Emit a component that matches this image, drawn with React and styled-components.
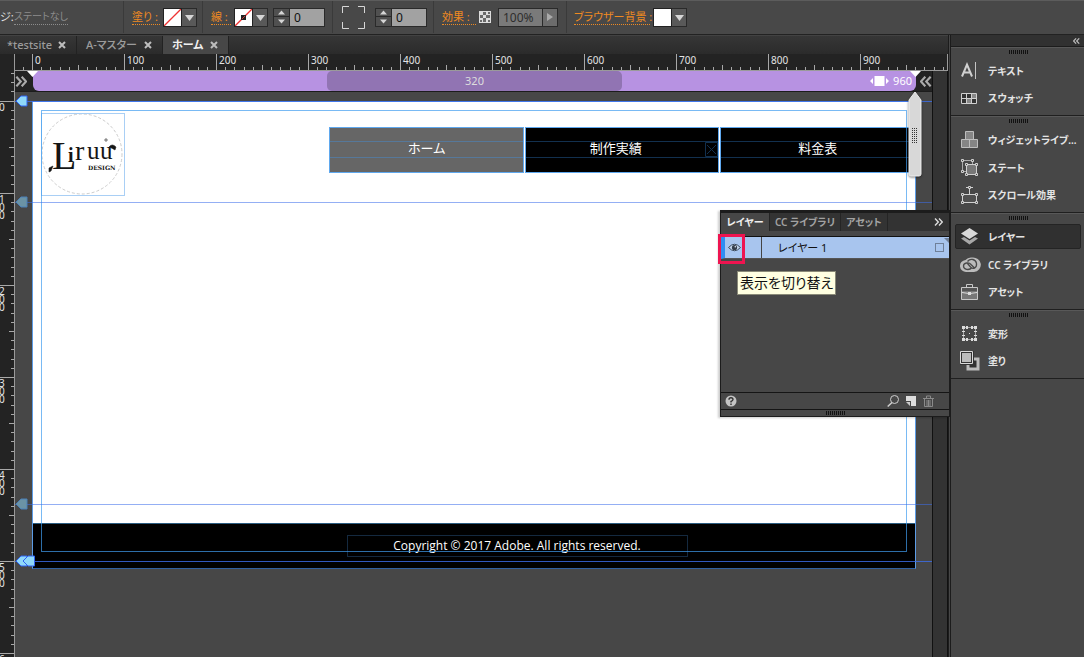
import React from "react";
import styled, { createGlobalStyle } from "styled-components";

const GlobalStyle = createGlobalStyle`
  * { box-sizing: border-box; }
  body {
    margin: 0;
    background: #474747;
    color: #e4e4e4;
    font-family: "Noto Sans", "Noto Sans CJK JP", sans-serif;
    font-size: 11px;
    line-height: 16px;
    font-feature-settings: "palt";
  }
  button, input {
    margin: 0;
    padding: 0;
    border: 0;
    border-radius: 0;
    background: none;
    color: inherit;
    font: inherit;
    font-feature-settings: inherit;
  }
  svg { display: block; flex: none; }
`;

const App = styled.div`
  display: flex;
  flex-direction: column;
  height: 100vh;
  overflow: hidden;
  white-space: nowrap;
`;

/* ---------- control strip ---------- */

const ControlStrip = styled.header`
  display: flex;
  flex: none;
  height: 35px;
  padding-bottom: 1px;
  border-top: 1px solid #5c5c5c;
  border-bottom: 1px solid #222;
  background: #484848;
`;

const ControlGroup = styled.div`
  display: flex;
  align-items: center;
  flex: none;
  width: ${(p) => p.$width}px;
  padding-left: ${(p) => p.$pad ?? 8}px;
  border-right: ${(p) => (p.$last ? "0" : "1px solid #3a3a3a")};
`;

const StateLabel = styled.span`
  flex: none;
  width: 14px;
`;

const FlyoutLink = styled.a`
  flex: none;
  width: ${(p) => (p.$width ? `${p.$width}px` : "auto")};
  margin-right: 3px;
  color: ${(p) => (p.$muted ? "#8c8c8c" : "#ee8a22")};
  font-size: ${(p) => (p.$muted ? 10 : 11)}px;
  line-height: 15px;
  text-decoration: none;
  border-bottom: 1px dotted currentColor;
`;

const SwatchButton = styled.button`
  width: 19px;
  height: 19px;
  border: 1px solid #222;
  background: #fff;
`;

const DropButton = styled.button`
  display: grid;
  place-items: center;
  width: 15px;
  height: 19px;
  border: 1px solid #2a2a2a;
  border-left: 0;
  background: ${(p) => (p.$dim ? "#6c6c6c" : "#595959")};
`;

const Spinner = styled.div`
  display: grid;
  grid-template-rows: 1fr 1fr;
  width: 17px;
  height: 19px;
  border: 1px solid #2a2a2a;
  background: #505050;
`;

const SpinButton = styled.button`
  display: grid;
  place-items: center;
  border-bottom: ${(p) => (p.$up ? "1px solid #2a2a2a" : "0")};
`;

const NumberBox = styled.input`
  width: ${(p) => p.$width}px;
  height: 19px;
  padding-left: 4px;
  border: 1px solid #2a2a2a;
  border-left: ${(p) => (p.$dim ? "1px solid #2a2a2a" : "0")};
  background: ${(p) => (p.$dim ? "#7a7a7a" : "#a2a2a2")};
  color: ${(p) => (p.$dim ? "#2e2e2e" : "#111")};
  font-size: 12px;
`;

const IconSlot = styled.span`
  margin-right: ${(p) => p.$gap}px;
`;

/* ---------- editor ---------- */

const Body = styled.div`
  display: flex;
  flex: 1;
  min-height: 0;
`;

const Editor = styled.main`
  display: flex;
  flex-direction: column;
  flex: 1;
  min-width: 0;
  position: relative;
`;

const TabBar = styled.nav`
  display: flex;
  flex: none;
  height: 19px;
  border-top: 1px solid #424242;
  background: linear-gradient(#363636, #2b2b2b);
`;

const Tab = styled.div`
  display: flex;
  align-items: center;
  flex: none;
  width: ${(p) => p.$width}px;
  padding: 0 10px 0 ${(p) => p.$pad}px;
  justify-content: space-between;
  border-right: 1px solid #222;
  background: ${(p) => (p.$active ? "#474747" : "none")};
  color: ${(p) => (p.$active ? "#f0f0f0" : "#9c9c9c")};
`;

const TabName = styled.button`
  font-weight: ${(p) => (p.$active ? 600 : 500)};
`;

const CloseButton = styled.button`
  color: #bdbdbd;
`;

const Stage = styled.div`
  display: flex;
  flex: 1;
  min-height: 0;
  background: #232323;
`;

const SideRuler = styled.div`
  flex: none;
  width: 15px;
  overflow: hidden;
  border-right: 1px solid #9a9a9a;
`;

const SideSegment = styled.div`
  display: grid;
  height: ${(p) => (p.$lead ? 47 : 92)}px;
  & > * { grid-area: 1 / 1; }
`;

const StackedDigits = styled.span`
  display: flex;
  flex-direction: column;
  margin-left: -1px;
  padding-top: 2px;
  font-size: 10px;
  line-height: 8px;
`;

const StageColumn = styled.div`
  display: flex;
  flex-direction: column;
  flex: 1;
  min-width: 0;
`;

const TopRuler = styled.div`
  display: flex;
  flex: none;
  height: 17px;
  overflow: hidden;
  border-bottom: 1px solid #9a9a9a;
  border-right: 1px solid #9a9a9a;
`;

const TopSegment = styled.div`
  display: grid;
  flex: none;
  width: ${(p) => (p.$lead ? 17 : 92)}px;
  & > * { grid-area: 1 / 1; }
`;

const RulerNumber = styled.span`
  padding-left: 3px;
  font-size: 10px;
  line-height: 13px;
`;

const ViewRow = styled.div`
  display: flex;
  flex: 1;
  min-height: 0;
`;

const View = styled.div`
  flex: 1;
  min-width: 0;
  background: #474747;
  position: relative;
`;

const ScrollTrack = styled.div`
  flex: none;
  width: 16px;
  border: solid #111;
  border-width: 0 1px;
  background: #333;
`;

const BreakpointRow = styled.div`
  display: flex;
  align-items: flex-start;
  height: 21px;
  background: #232323;
  border-bottom: 1px solid #1c1c1c;
`;

const BreakpointEnd = styled.button`
  display: flex;
  align-items: center;
  flex: none;
  justify-content: ${(p) => (p.$right ? "flex-end" : "flex-start")};
  width: ${(p) => (p.$right ? 16 : 18)}px;
  height: 20px;
`;

const BreakpointBar = styled.div`
  display: grid;
  grid-template-columns: 1fr 1fr 1fr;
  flex: 1;
  height: 20px;
  border-radius: 4px 4px 6px 6px;
  background: #b792e2;
  color: #fff;
  line-height: 20px;
`;

const BreakpointMiddle = styled.span`
  grid-column: 2;
  border-radius: 5px;
  background: #9174b3;
  color: #ddd;
  text-align: center;
`;

const BreakpointWidth = styled.span`
  display: flex;
  align-items: center;
  justify-content: flex-end;
  gap: 4px;
  padding-right: 4px;
`;

const BarNotch = styled.svg`
  position: absolute;
  top: 0;
  ${(p) => (p.$right ? "right: 11px" : "left: 12px")};
`;

/* ---------- web page on the canvas ---------- */

const SitePage = styled.article`
  display: flex;
  flex-direction: column;
  margin: 9px 16px 0 17px;
  border: 1px solid #5c9ce6;
  border-bottom-color: #2f5fa0;
  background: #fff;
`;

const SiteHeader = styled.div`
  display: flex;
  justify-content: space-between;
  height: 101px;
  padding: 11px 0 0 8px;
`;

const LogoFrame = styled.div`
  width: 84px;
  height: 83px;
  border: 1px solid #a9cff5;
`;

const SiteNav = styled.nav`
  display: flex;
  flex: none;
  gap: 1px;
  width: 588px;
  max-width: 67%;
  height: 46px;
  margin-top: 14px;
`;

const NavItem = styled.a`
  display: flex;
  align-items: center;
  flex: 1;
  padding-bottom: 1px;
  border: 1px solid #5fa8ee;
  background: ${(p) => (p.$active ? "#666" : "#000")};
  color: #fff;
  text-decoration: none;
`;

const NavText = styled.span`
  display: flex;
  align-items: center;
  justify-content: center;
  flex: 1;
  height: 17px;
  padding: 0 ${(p) => (p.$spacer ? 13 : 0)}px 2px 0;
  border: solid ${(p) => (p.$active ? "#56789a" : "#12304e")};
  border-width: 1px 0;
  font-size: 13px;
  line-height: 13px;
  position: relative;
`;

const SpacerMark = styled.svg`
  position: absolute;
  right: 0;
  top: 0;
`;

const SiteMain = styled.div`
  min-height: 320px;
`;

const SiteFooter = styled.footer`
  display: flex;
  justify-content: center;
  padding: 11px 0 11px 86px;
  border-top: 1px solid #2b5c80;
  background: #000;
`;

const Copyright = styled.p`
  width: 341px;
  margin: 0;
  border: 1px solid #14293f;
  color: #fff;
  font-family: "Open Sans", "Noto Sans", sans-serif;
  font-size: 12px;
  font-weight: 500;
  line-height: 20px;
  text-align: center;
`;

const MarginFrame = styled.div`
  position: absolute;
  top: 39px;
  left: 26px;
  right: 25px;
  height: 442px;
  border: 1px solid rgba(64, 156, 240, 0.7);
  pointer-events: none;
`;

const Guide = styled.div`
  position: absolute;
  left: 0;
  right: 0;
  top: ${(p) => p.$top}px;
  height: 1px;
  background: rgba(60, 110, 235, ${(p) => (p.$faint ? 0.55 : 0.8)});
`;

const GuideHandle = styled.svg`
  position: absolute;
  left: 0;
  top: -6px;
`;

const WidthHandle = styled.svg`
  position: absolute;
  right: 10px;
  top: 20px;
  filter: drop-shadow(0 1px 1px rgba(0, 0, 0, 0.5));
`;

/* ---------- floating layers panel ---------- */

const LayersPanel = styled.section`
  position: absolute;
  top: 175px;
  right: -2px;
  width: 230px;
  display: flex;
  flex-direction: column;
  border: 1px solid #1c1c1c;
  border-top-width: 3px;
  background: #474747;
  box-shadow: -2px 1px 2px rgba(0, 0, 0, 0.2);
  font-size: 10px;
  font-weight: 600;
`;

const PanelTabs = styled.div`
  display: flex;
  align-items: stretch;
  height: 18px;
  background: #333;
`;

const PanelTab = styled.button`
  width: ${(p) => p.$width}px;
  border-right: 1px solid #252525;
  background: ${(p) => (p.$active ? "#474747" : "none")};
  color: ${(p) => (p.$active ? "#eee" : "#a2a2a2")};
  font-weight: 600;
`;

const PanelMenu = styled.button`
  margin-left: auto;
  padding-right: 6px;
`;

const LayerRow = styled.div`
  display: flex;
  align-items: center;
  height: 23px;
  margin-top: 5px;
  border-top: 1px solid #111;
  border-left: 4px solid #2f8ef4;
  border-bottom: 1px solid #555;
  background: #a8c5ee;
  color: #111;
  font-size: 11px;
  font-weight: 400;
  position: relative;
`;

const LayerEye = styled.button`
  display: grid;
  place-items: center;
  width: 19px;
  height: 21px;
`;

const LayerName = styled.span`
  flex: 1;
  height: 21px;
  margin-left: 17px;
  padding-left: 16px;
  border-left: 1px solid #444;
  line-height: 22px;
`;

const LayerTarget = styled.button`
  width: 9px;
  height: 9px;
  margin-right: 5px;
  border: 1px solid #6f8099;
`;

const RowCorner = styled.svg`
  position: absolute;
  right: 0;
  top: 1px;
`;

const Highlight = styled.div`
  position: absolute;
  top: -3px;
  left: -7px;
  width: 27px;
  height: 30px;
  border: 3px solid #ee1450;
`;

const Tooltip = styled.div`
  position: absolute;
  top: 58px;
  left: 16px;
  padding: 0 2px;
  border: 1px solid #8a8a78;
  background: #ffffe1;
  color: #111;
  font-size: 14px;
  font-weight: 400;
  line-height: 22px;
`;

const PanelBody = styled.div`
  min-height: 133px;
`;

const PanelFooter = styled.div`
  display: flex;
  align-items: center;
  gap: 7px;
  height: 18px;
  padding: 0 15px 0 4px;
  border: solid #151515;
  border-width: 1px 0;
`;

const FooterButton = styled.button`
  margin-right: ${(p) => (p.$first ? "auto" : "0")};
`;

const PanelGrip = styled.div`
  display: grid;
  place-items: center;
  height: 6px;
`;

/* ---------- dock ---------- */

const Dock = styled.aside`
  flex: none;
  width: 136px;
  border-left: 3px double #1c1c1c;
  background: #474747;
`;

const DockTop = styled.div`
  display: flex;
  align-items: center;
  justify-content: flex-end;
  height: 12px;
  padding-right: 4px;
  border-bottom: 1px solid #1c1c1c;
  background: #313131;
`;

const DockGroup = styled.ul`
  display: flex;
  flex-direction: column;
  margin: 0;
  padding: 9px 3px 3px 4px;
  border-top: 1px solid #585858;
  border-bottom: 1px solid #1f1f1f;
  list-style: none;
  position: relative;
  height: ${(p) => 13 + p.$count * 28}px;
`;

const DockGrip = styled.svg`
  position: absolute;
  top: 2px;
  left: 57px;
`;

const DockSlot = styled.li`
  display: flex;
  align-items: center;
  height: 28px;
`;

const DockButton = styled.button`
  display: flex;
  align-items: center;
  gap: 7px;
  width: 100%;
  height: 25px;
  padding-left: 4px;
  border: 1px solid ${(p) => (p.$active ? "#242424" : "transparent")};
  border-radius: 2px;
  background: ${(p) => (p.$active ? "#303030" : "none")};
  font-size: 10px;
  font-weight: 600;
`;

/* ---------- drawings ---------- */

const Down = () => (
  <svg width="9" height="7"><path d="M0 1h9L4.500 7z" fill="#d6d6d6" /></svg>
);
const SpinArrow = ({ up }) => (
  <svg width="7" height="5"><path d={up ? "M0 4.500L3.500 .5 7 4.500z" : "M0 .5h7L3.500 4.500z"} fill="#d6d6d6" /></svg>
);
const Cross = () => (
  <svg width="8" height="8"><path d="M1 1l6 6M7 1L1 7" stroke="currentColor" strokeWidth="2" /></svg>
);
const Chevrons = ({ left, size = 8, width = 1.4, color = "#ddd" }) => (
  <svg width={size + 1} height={size} viewBox="0 0 9 8" preserveAspectRatio="none">
    <path d={left ? "M4 .5L.7 4 4 7.500M8 .5L4.700 4 8 7.500" : "M1 .5L4.300 4 1 7.500M5 .5L8.300 4 5 7.500"} fill="none" stroke={color} strokeWidth={width} />
  </svg>
);
const gripLines = "M1 0v4M3 0v4M5 0v4M7 0v4M9 0v4M11 0v4M13 0v4M15 0v4M17 0v4M19 0v4";
const gripProps = { width: 20, height: 4, stroke: "#111", shapeRendering: "crispEdges", "aria-hidden": true };

const tickOffsets = [0, 9, 18, 28, 37, 46, 55, 64, 74, 83];
const tickSize = (i) => (i === 0 ? 16 : i === 5 ? 5 : 3);

function TopTicks() {
  return (
    <svg width="92" height="16" fill="#a8a8a8" shapeRendering="crispEdges">
      {tickOffsets.map((x, i) => <rect key={x} x={x} y={16 - tickSize(i)} width="1" height={tickSize(i)} />)}
    </svg>
  );
}

function SideTicks() {
  return (
    <svg width="14" height="92" fill="#a8a8a8" shapeRendering="crispEdges">
      {tickOffsets.map((y, i) => <rect key={y} y={y} x={14 - tickSize(i)} height="1" width={tickSize(i)} />)}
    </svg>
  );
}

const node = { fill: "#474747", stroke: "#d0d0d0" };

const dockIcons = {
  text: (
    <svg width="21" height="21" viewBox="0 0 21 21">
      <path d="M2 16.500L7 4.500l5 12M4 12.500h6" fill="none" stroke="#d0d0d0" strokeWidth="2" />
      <path d="M15.500 2v17" stroke="#c4c4c4" />
    </svg>
  ),
  swatch: (
    <svg width="21" height="21" viewBox="0 0 21 21">
      <path d="M1.500 5.500h15v10h-15z" fill="#333" stroke="#d0d0d0" />
      <path d="M12 6h4v4h-4zM7 11h4v4H7z" fill="#888" />
      <path d="M6.500 5v11M11.500 5v11M1 10.500h16" stroke="#d0d0d0" />
    </svg>
  ),
  widget: (
    <svg width="21" height="21" viewBox="0 0 21 21" fill="#858585" stroke="#bdbdbd">
      <path d="M5.500 2.500h8v8h-8zM1.500 10.500h8v8h-8zM9.500 10.500h8v8h-8z" />
    </svg>
  ),
  state: (
    <svg width="21" height="21" viewBox="0 0 21 21">
      <path d="M2.500 3.500h10v11h-10z" fill="none" stroke="#aaa" />
      <path d="M6.500 7.500h10v10h-10z" fill="#777" stroke="#d0d0d0" />
      <path d="M1.500 2.500h2v2h-2zM11.500 2.500h2v2h-2zM1.500 13.500h2v2h-2zM5.500 6.500h2v2h-2zM15.500 6.500h2v2h-2zM5.500 16.500h2v2h-2zM15.500 16.500h2v2h-2z" {...node} />
    </svg>
  ),
  scroll: (
    <svg width="21" height="21" viewBox="0 0 21 21">
      <path d="M2.500 9.500h14v8h-14z" fill="#505050" stroke="#d0d0d0" />
      <path d="M9.500 9V3M6 2.500h7" stroke="#d0d0d0" />
      <path d="M8.500 1.500h2v2h-2zM1.500 8.500h2v2h-2zM15.500 8.500h2v2h-2zM1.500 16.500h2v2h-2zM15.500 16.500h2v2h-2z" {...node} />
    </svg>
  ),
  layers: (
    <svg width="21" height="21" viewBox="0 0 21 21">
      <path d="M1 12.500l3-1.500 5.500 3.500L15 11l3 1.500-8.500 6z" fill="#a8a8a8" />
      <path d="M9.500 2L18 7.500 9.500 13 1 7.500z" fill="#dadada" />
    </svg>
  ),
  cloud: (
    <svg width="21" height="21" viewBox="0 0 21 21">
      <path d="M6.500 18a6 6 0 0 1-1-12Q8 3 12 3.500A7.500 7 0 0 1 14 18z" fill="#bcbcbc" />
      <path d="M12 13.500C9 17 3.500 15.500 3.500 12S9 8 11 10.500l3.500 3.500M7.500 7.500c3-4 8.500-2 9 2 .5 4-3 6.500-6 3.500L7.500 9.500" fill="none" stroke="#4a4a4a" strokeWidth="1.300" />
    </svg>
  ),
  asset: (
    <svg width="21" height="21" viewBox="0 0 21 21">
      <path d="M6.500 5V2.500h6V5" fill="none" stroke="#c8c8c8" />
      <path d="M1.500 5.500h16v12h-16z" fill="#777" stroke="#c8c8c8" />
      <path d="M2 6h15v3H2z" fill="#555" />
      <path d="M2 10.500l7 1h1l7-1" fill="none" stroke="#ddd" />
      <path d="M8 10h3v3H8z" fill="#ddd" />
    </svg>
  ),
  transform: (
    <svg width="21" height="21" viewBox="0 0 21 21" fill="#dcdcdc">
      <path d="M3.500 4.500h12v12h-12z" fill="none" stroke="#a8a8a8" />
      <path d="M2 3h3v3H2zM6 3h2v3H6zM11 3h2v3h-2zM14 3h3v3h-3zM2 8h3v1H2zM2 12h3v1H2zM14 8h3v1h-3zM14 12h3v1h-3zM2 15h3v3H2zM6 15h2v3H6zM11 15h2v3h-2zM14 15h3v3h-3zM9 10h1v1H9z" />
    </svg>
  ),
  fill: (
    <svg width="21" height="21" viewBox="0 0 21 21">
      <path d="M8 8h10v10H8z" fill="#333" stroke="#bcbcbc" strokeWidth="3" />
      <path d="M0 0h14v14H0z" fill="#333" />
      <path d="M.5 .5h12v12H.500z" fill="#333" stroke="#dadada" />
      <path d="M2 2h9v9H2z" fill="#bcbcbc" />
    </svg>
  ),
};

function Logo() {
  return (
    <svg width="82" height="81" viewBox="0 0 82 81" role="img" aria-label="Liruu DESIGN" fontFamily="Liberation Serif, serif" fill="#151515">
      <circle cx="40" cy="40" r="40" fill="none" stroke="#ccc" strokeDasharray="3 2" />
      <text x="10" y="55" fontSize="40">L</text>
      <text x="26" y="48" fontSize="20" fontWeight="700">i</text>
      <text x="33" y="46" fontSize="28">r</text>
      <text x="45" y="45" fontSize="25">u</text>
      <text x="58" y="45" fontSize="25">u</text>
      <text x="46" y="56" fontSize="6" fontWeight="700" fontFamily="DejaVu Serif, serif">DESIGN</text>
      <path d="M67 33q3-4 7 0l-1 3q-3-2-6-3zM7 54l4-2-2 5-2 1zM62 26h4M64 24v4" stroke="#222" strokeWidth=".6" />
    </svg>
  );
}

/* ---------- data ---------- */

const topMarks = ["0", "100", "200", "300", "400", "500", "600", "700", "800", "900"];
const sideMarks = ["0", "100", "200", "300", "400", "500", "600"];

const dockGroups = [
  [["text", "テキスト"], ["swatch", "スウォッチ"]],
  [["widget", "ウィジェットライブ..."], ["state", "ステート"], ["scroll", "スクロール効果"]],
  [["layers", "レイヤー", true], ["cloud", "CC ライブラリ"], ["asset", "アセット"]],
  [["transform", "変形"], ["fill", "塗り"]],
];

const tabs = [
  { name: "*testsite", width: 77, pad: 7 },
  { name: "A-マスター", width: 86, pad: 9 },
  { name: "ホーム", width: 66, pad: 9, active: true },
];

const guides = [
  { top: 30, kind: "bright" },
  { top: 131, kind: "dim", faint: true },
  { top: 433, kind: "dim", faint: true },
  { top: 490, kind: "double" },
];

/* ---------- parts ---------- */

function SpinField({ label }) {
  return (
    <>
      <Spinner>
        <SpinButton $up aria-label={`${label} +`}><SpinArrow up /></SpinButton>
        <SpinButton aria-label={`${label} -`}><SpinArrow /></SpinButton>
      </Spinner>
      <NumberBox $width={35} aria-label={label} defaultValue="0" />
    </>
  );
}

function Controls() {
  return (
    <ControlStrip>
      <ControlGroup $width={124} $pad={0}>
        <StateLabel>ジ:</StateLabel>
        <FlyoutLink href="#state" $muted>ステートなし</FlyoutLink>
      </ControlGroup>
      <ControlGroup $width={79}>
        <FlyoutLink href="#fill" $width={28}>塗り :</FlyoutLink>
        <SwatchButton aria-label="塗り">
          <svg width="17" height="17"><path d="M0 17L17 0" stroke="#e33" strokeWidth="1.300" /></svg>
        </SwatchButton>
        <DropButton aria-label="塗りメニュー"><Down /></DropButton>
      </ControlGroup>
      <ControlGroup $width={130}>
        <FlyoutLink href="#stroke" $width={20}>線 :</FlyoutLink>
        <SwatchButton aria-label="線">
          <svg width="17" height="17">
            <path d="M0 17L17 0" stroke="#e33" strokeWidth="1.300" />
            <path d="M6 6h5v5H6z" fill="#222" />
            <path d="M7 10l3-3" stroke="#c33" />
          </svg>
        </SwatchButton>
        <DropButton aria-label="線メニュー"><Down /></DropButton>
        <IconSlot $gap={5} />
        <SpinField label="線幅" />
      </ControlGroup>
      <ControlGroup $width={101} $pad={9}>
        <IconSlot $gap={10}>
          <svg width="23" height="23"><path d="M.5 7V.500H7M16 .5h6.500V7M.5 16v6.500H7M22.500 16v6.500H16" fill="none" stroke="#d6d6d6" /></svg>
        </IconSlot>
        <SpinField label="角丸" />
      </ControlGroup>
      <ControlGroup $width={133}>
        <FlyoutLink href="#effects" $width={34}>効果 :</FlyoutLink>
        <IconSlot $gap={7}>
          <svg width="12" height="12">
            <path d="M0 0h12v12H0z" fill="#ddd" />
            <path d="M4 1h3v3H4zM1 4h3v3H1zM7 4h4v3H7zM4 7h3v4H4zM9 1h2v2H9zM9 9h2v2H9zM1 9h2v2H1z" fill="#6a6a6a" />
          </svg>
        </IconSlot>
        <NumberBox $width={45} $dim aria-label="不透明度" defaultValue="100%" />
        <DropButton $dim aria-label="不透明度メニュー">
          <svg width="6" height="8"><path d="M0 0l6 4-6 4z" fill="#aaa" /></svg>
        </DropButton>
      </ControlGroup>
      <ControlGroup $width={130} $pad={7} $last>
        <FlyoutLink href="#background" $width={76}>ブラウザー背景 :</FlyoutLink>
        <SwatchButton aria-label="ブラウザー背景" />
        <DropButton aria-label="背景メニュー"><Down /></DropButton>
      </ControlGroup>
    </ControlStrip>
  );
}

function GuideShape({ kind }) {
  const fill = kind === "dim" ? "#6b93a5" : "#8fd8fa";
  return (
    <GuideHandle width="20" height="12">
      <path d="M1 6L6 1h6v10H6z" fill={fill} stroke={kind === "dim" ? "#4a80b8" : "#2f62f0"} />
      {kind === "double" && <path d="M8 6l5-5h6.500v10H13z" fill={fill} stroke="#2f62f0" />}
    </GuideHandle>
  );
}

function WebPage() {
  return (
    <SitePage>
      <SiteHeader>
        <LogoFrame><Logo /></LogoFrame>
        <SiteNav>
          <NavItem href="#home" $active><NavText $active>ホーム</NavText></NavItem>
          <NavItem href="#works">
            <NavText $spacer>
              制作実績
              <SpacerMark width="13" height="15"><path d="M.5 .5h12v14H.500zM2 3l9 9M11 3l-9 9" fill="none" stroke="#12304e" /></SpacerMark>
            </NavText>
          </NavItem>
          <NavItem href="#price"><NavText>料金表</NavText></NavItem>
        </SiteNav>
      </SiteHeader>
      <SiteMain />
      <SiteFooter><Copyright>Copyright © 2017 Adobe. All rights reserved.</Copyright></SiteFooter>
    </SitePage>
  );
}

function Layers() {
  return (
    <LayersPanel>
      <PanelTabs>
        <PanelTab $width={49} $active>レイヤー</PanelTab>
        <PanelTab $width={71}>CC ライブラリ</PanelTab>
        <PanelTab $width={47}>アセット</PanelTab>
        <PanelMenu aria-label="パネルメニュー"><Chevrons /></PanelMenu>
      </PanelTabs>
      <LayerRow>
        <LayerEye aria-label="表示を切り替え">
          <svg width="13" height="9" viewBox="0 0 13 9">
            <path d="M.5 4.500Q6.500-2 12.500 4.500 6.500 11 .5 4.500z" fill="#c3d6ee" stroke="#3c4a5c" />
            <circle cx="6.500" cy="4.500" r="2.600" fill="#333d4a" />
            <circle cx="7.300" cy="3.700" r=".8" fill="#dfe8f4" />
          </svg>
        </LayerEye>
        <LayerName>レイヤー 1</LayerName>
        <LayerTarget aria-label="選択" />
        <RowCorner width="5" height="5"><path d="M0 0h5v5z" fill="#6f7f96" /></RowCorner>
        <Highlight />
      </LayerRow>
      <PanelBody />
      <Tooltip role="tooltip">表示を切り替え</Tooltip>
      <PanelFooter>
        <FooterButton $first aria-label="ヘルプ">
          <svg width="12" height="12">
            <circle cx="6" cy="6" r="5.500" fill="#c4c4c4" />
            <path d="M4 4.700q0-2 2-2t2 1.800Q8 5.500 6 6.500v1M6 8.500V10" fill="none" stroke="#333" strokeWidth="1.400" />
          </svg>
        </FooterButton>
        <FooterButton aria-label="検索">
          <svg width="12" height="12"><circle cx="7.500" cy="4.500" r="4" fill="none" stroke="#cfcfcf" /><path d="M5 7.500L.7 11.500" stroke="#cfcfcf" strokeWidth="1.500" /></svg>
        </FooterButton>
        <FooterButton aria-label="新規レイヤー">
          <svg width="10" height="10"><path d="M0 0h10v10H5V5H0z" fill="#ddd" /><path d="M0 6h4v4z" fill="#ccc" /></svg>
        </FooterButton>
        <FooterButton aria-label="削除">
          <svg width="11" height="12"><path d="M0 3.500h11M3.500 3V1h4v2M1.500 4v7.500h8V4M4 5v6M5.500 5v6M7 5v6" fill="none" stroke="#8a8a8a" /></svg>
        </FooterButton>
      </PanelFooter>
      <PanelGrip><svg {...gripProps}><path d={gripLines} /></svg></PanelGrip>
    </LayersPanel>
  );
}

export default function MuseWorkspace() {
  return (
    <App>
      <GlobalStyle />
      <Controls />
      <Body>
        <Editor>
          <TabBar>
            {tabs.map((t) => (
              <Tab key={t.name} $width={t.width} $pad={t.pad} $active={t.active}>
                <TabName $active={t.active}>{t.name}</TabName>
                <CloseButton aria-label={`${t.name} を閉じる`}><Cross /></CloseButton>
              </Tab>
            ))}
          </TabBar>
          <Stage>
            <SideRuler>
              <SideSegment $lead>
                <svg width="14" height="47" fill="#a8a8a8" shapeRendering="crispEdges">
                  <path d="M11 19h3v1h-3zM11 28h3v1h-3zM11 37h3v1h-3z" />
                </svg>
              </SideSegment>
              {sideMarks.map((m) => (
                <SideSegment key={m}>
                  <StackedDigits>{[...m].map((d, i) => <span key={i}>{d}</span>)}</StackedDigits>
                  <SideTicks />
                </SideSegment>
              ))}
            </SideRuler>
            <StageColumn>
              <TopRuler>
                <TopSegment $lead>
                  <svg width="17" height="16" fill="#a8a8a8" shapeRendering="crispEdges"><path d="M8 13h1v3H8z" /></svg>
                </TopSegment>
                {topMarks.map((m) => (
                  <TopSegment key={m}><TopTicks /><RulerNumber>{m}</RulerNumber></TopSegment>
                ))}
              </TopRuler>
              <ViewRow>
                <View>
                  <BreakpointRow>
                    <BreakpointEnd aria-label="前のブレークポイント"><Chevrons size={11} width={1.6} color="#aaa" /></BreakpointEnd>
                    <BreakpointBar>
                      <BreakpointMiddle>320</BreakpointMiddle>
                      <BreakpointWidth>
                        <svg width="19" height="10"><path d="M3 2v6L0 5zM16 2v6l3-3zM4.500 0h10v10h-10z" fill="#fff" /></svg>
                        960
                      </BreakpointWidth>
                    </BreakpointBar>
                    <BreakpointEnd $right aria-label="次のブレークポイント"><Chevrons left size={11} width={1.6} color="#aaa" /></BreakpointEnd>
                  </BreakpointRow>
                  <BarNotch width="11" height="6"><path d="M0 0h11L5.500 6z" fill="#fff" /></BarNotch>
                  <BarNotch $right width="11" height="6"><path d="M0 0h11L5.500 6z" fill="#fff" /></BarNotch>
                  <WebPage />
                  <MarginFrame />
                  {guides.map((g) => (
                    <Guide key={g.top} $top={g.top} $faint={g.faint}><GuideShape kind={g.kind} /></Guide>
                  ))}
                  <WidthHandle width="14" height="86">
                    <path d="M7 1l6 8v74q0 2-2 2H3q-2 0-2-2V9z" fill="#d8d8d8" stroke="#eee" />
                    <path d="M4.500 37v16M6.500 37v16M8.500 37v16" stroke="#333" strokeDasharray="1 1" />
                  </WidthHandle>
                </View>
                <ScrollTrack />
              </ViewRow>
            </StageColumn>
          </Stage>
          <Layers />
        </Editor>
        <Dock>
          <DockTop><Chevrons left size={6} width={1.6} color="#bbb" /></DockTop>
          {dockGroups.map((items) => (
            <DockGroup key={items[0][0]} $count={items.length}>
              <DockGrip {...gripProps}><path d={gripLines} /></DockGrip>
              {items.map(([icon, label, active]) => (
                <DockSlot key={icon}>
                  <DockButton $active={active}>{dockIcons[icon]}{label}</DockButton>
                </DockSlot>
              ))}
            </DockGroup>
          ))}
        </Dock>
      </Body>
    </App>
  );
}
